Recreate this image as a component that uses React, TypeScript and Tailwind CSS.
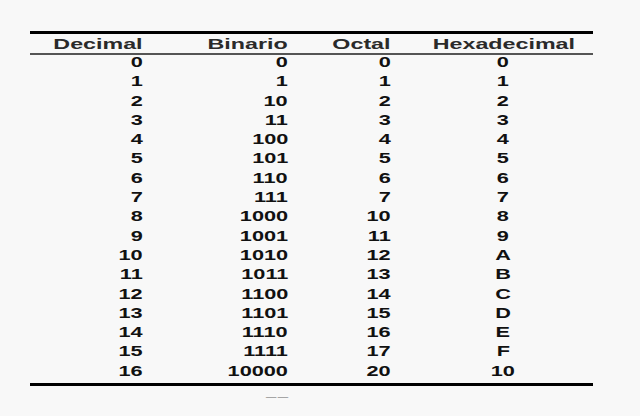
const rows: [string, string, string, string][] = [
  ["0", "0", "0", "0"],
  ["1", "1", "1", "1"],
  ["2", "10", "2", "2"],
  ["3", "11", "3", "3"],
  ["4", "100", "4", "4"],
  ["5", "101", "5", "5"],
  ["6", "110", "6", "6"],
  ["7", "111", "7", "7"],
  ["8", "1000", "10", "8"],
  ["9", "1001", "11", "9"],
  ["10", "1010", "12", "A"],
  ["11", "1011", "13", "B"],
  ["12", "1100", "14", "C"],
  ["13", "1101", "15", "D"],
  ["14", "1110", "16", "E"],
  ["15", "1111", "17", "F"],
  ["16", "10000", "20", "10"],
];

// the source picture is stretched sideways, so each cell is widened the same way
function Cell({ children, center }: { children: string; center?: boolean }) {
  return (
    <div className={center ? "text-center" : "text-right"}>
      <span
        className={`inline-block scale-x-[1.55] ${center ? "origin-center" : "origin-right"}`}
      >
        {children}
      </span>
    </div>
  );
}

export default function App() {
  return (
    <div className="h-[416px] w-[640px] overflow-hidden bg-[#f8f8f8] font-['Liberation_Sans',Arial,sans-serif] text-[#111]">
      <div className="ml-[30px] w-[563px] pt-[31px]">
        <div className="border-t-[3px] border-black" />
        <div className="grid h-[19px] grid-cols-[113px_145px_103px_202px] items-center text-[15px] font-bold leading-none text-[#2a2a2a]">
          <Cell>Decimal</Cell>
          <Cell>Binario</Cell>
          <Cell>Octal</Cell>
          <div className="pl-[24px]">
            <Cell center>Hexadecimal</Cell>
          </div>
        </div>
        <div className="border-t-2 border-[#555]" />
        <div className="flex flex-col text-[14px] font-bold">
          {rows.map((r) => (
            <div
              key={r[0]}
              className="grid h-[19.3px] grid-cols-[113px_145px_103px_202px] leading-[15px]"
            >
              <Cell>{r[0]}</Cell>
              <Cell>{r[1]}</Cell>
              <Cell>{r[2]}</Cell>
              <div className="pl-[22px]">
                <Cell center>{r[3]}</Cell>
              </div>
            </div>
          ))}
        </div>
        <div className="border-t-[3px] border-black" />
        <div className="mt-[10px] ml-[236px] text-[12px] font-bold leading-[14px] tracking-[1px] text-[#666]">
          <span className="inline-block origin-left scale-x-[1.55]">¯¯</span>
        </div>
      </div>
    </div>
  );
}
